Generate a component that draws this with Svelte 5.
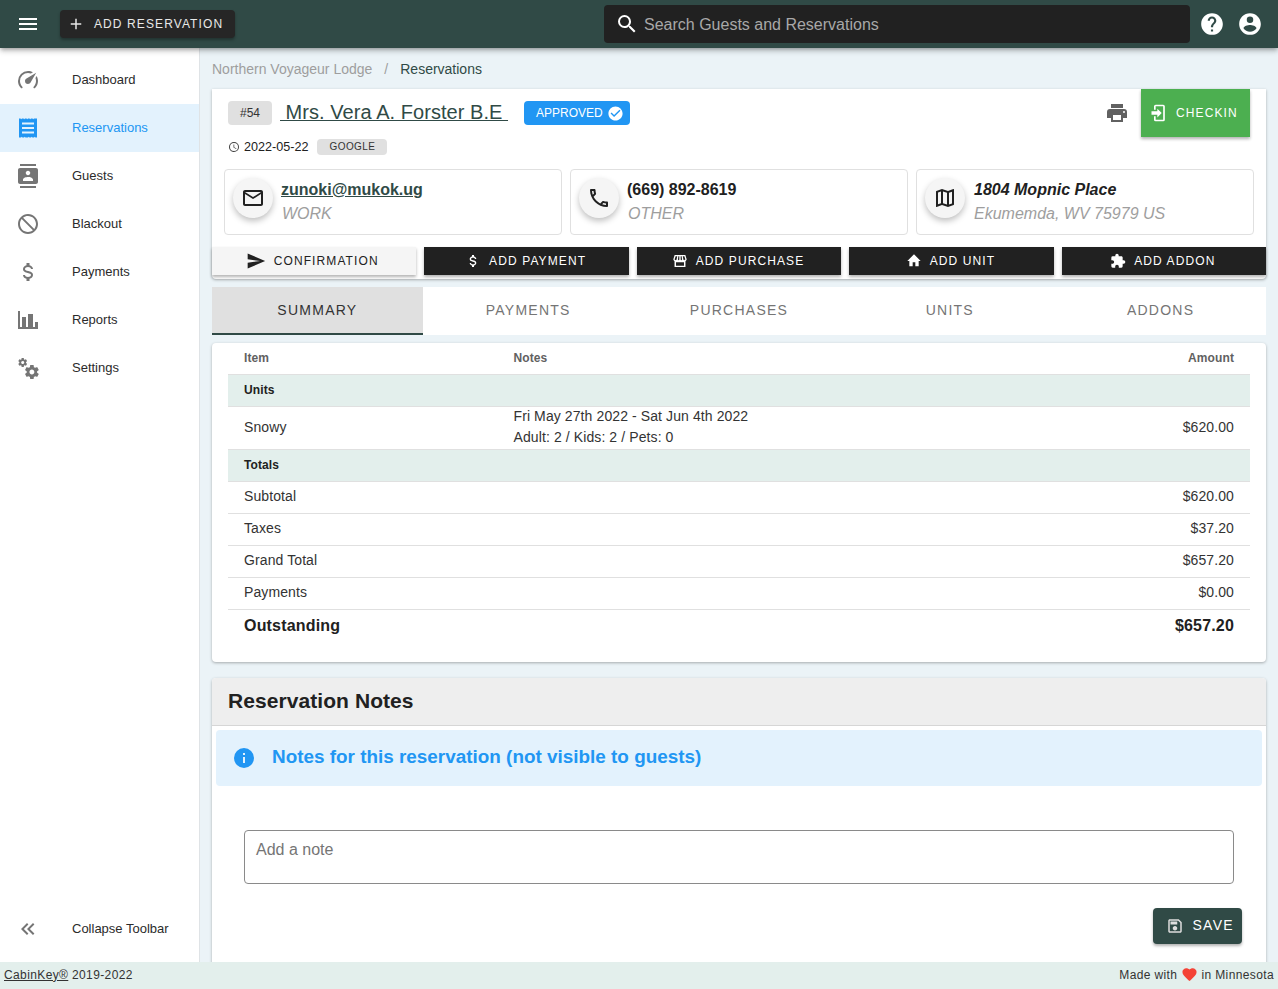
<script>
  const p = {
    menu: 'M3,6H21V8H3V6M3,11H21V13H3V11M3,16H21V18H3V16Z',
    plus: 'M19,13H13V19H11V13H5V11H11V5H13V11H19V13Z',
    search: 'M9.5,3A6.5,6.5 0 0,1 16,9.5C16,11.11 15.41,12.59 14.44,13.73L14.71,14H15.5L20.5,19L19,20.5L14,15.5V14.71L13.73,14.44C12.59,15.41 11.11,16 9.5,16A6.5,6.5 0 0,1 3,9.5A6.5,6.5 0 0,1 9.5,3M9.5,5C7,5 5,7 5,9.5C5,12 7,14 9.5,14C12,14 14,12 14,9.5C14,7 12,5 9.5,5Z',
    help: 'M15.07,11.25L14.17,12.17C13.45,12.89 13,13.5 13,15H11V14.5C11,13.39 11.45,12.39 12.17,11.67L13.41,10.41C13.78,10.05 14,9.55 14,9C14,7.89 13.1,7 12,7A2,2 0 0,0 10,9H8A4,4 0 0,1 12,5A4,4 0 0,1 16,9C16,9.88 15.64,10.67 15.07,11.25M13,19H11V17H13M12,2A10,10 0 0,0 2,12A10,10 0 0,0 12,22A10,10 0 0,0 22,12C22,6.47 17.5,2 12,2Z',
    account: 'M12,19.2C9.5,19.2 7.29,17.92 6,16C6.03,14 10,12.9 12,12.9C14,12.9 17.97,14 18,16C16.71,17.92 14.5,19.2 12,19.2M12,5A3,3 0 0,1 15,8A3,3 0 0,1 12,11A3,3 0 0,1 9,8A3,3 0 0,1 12,5M12,2A10,10 0 0,0 2,12A10,10 0 0,0 12,22A10,10 0 0,0 22,12C22,6.47 17.5,2 12,2Z',
    gauge: 'M12,16A3,3 0 0,1 9,13C9,11.88 9.61,10.9 10.5,10.39L20.21,4.77L14.68,14.35C14.18,15.33 13.17,16 12,16M12,3C13.81,3 15.5,3.5 16.97,4.32L14.87,5.53C14,5.19 13,5 12,5A8,8 0 0,0 4,13C4,15.21 4.89,17.21 6.34,18.65H6.35C6.74,19.04 6.74,19.67 6.35,20.06C5.96,20.45 5.32,20.45 4.93,20.07V20.07C3.12,18.26 2,15.76 2,13A10,10 0 0,1 12,3M22,13C22,15.76 20.88,18.26 19.07,20.07V20.07C18.68,20.45 18.05,20.45 17.66,20.06C17.27,19.67 17.27,19.04 17.66,18.65V18.65C19.11,17.2 20,15.21 20,13C20,12 19.81,11 19.46,10.1L20.67,8C21.5,9.5 22,11.18 22,13Z',
    receipt: 'M3 2.500h1.500l.75.7.75-.7h1.500l.75.7.75-.7h1.500l.75.7.75-.7h1.500l.75.7.75-.7h1.500l.75.7.75-.7H21v19h-1.500l-.75-.7-.75.7h-1.500l-.75-.7-.75.7h-1.500l-.75-.7-.75.7H9.500l-.75-.7-.75.7H6.500l-.75-.7-.75.7H3zM6 6.500v2h12v-2zM6 11v2h12v-2zM6 15.500v2h12v-2z',
    contacts: 'M20 0H4v2h16V0zM4 24h16v-2H4v2zM20 4H4c-1.100 0-2 .9-2 2v12c0 1.100.9 2 2 2h16c1.100 0 2-.9 2-2V6c0-1.100-.9-2-2-2zm-8 2.750c1.240 0 2.250 1.010 2.250 2.250s-1.010 2.250-2.250 2.250S9.750 10.240 9.750 9 10.760 6.750 12 6.750zM17 17H7v-1.500c0-1.670 3.330-2.500 5-2.500s5 .83 5 2.500V17z',
    cancel: 'M12 2C17.5 2 22 6.5 22 12S17.5 22 12 22 2 17.5 2 12 6.5 2 12 2M12 4C10.1 4 8.4 4.6 7.1 5.7L18.3 16.9C19.3 15.5 20 13.8 20 12C20 7.6 16.4 4 12 4M16.9 18.3L5.7 7.1C4.6 8.4 4 10.1 4 12C4 16.4 7.6 20 12 20C13.9 20 15.6 19.4 16.9 18.3Z',
    dollar: 'M7,15H9C9,16.08 10.37,17 12,17C13.63,17 15,16.08 15,15C15,13.9 13.96,13.5 11.76,12.97C9.64,12.44 7,11.78 7,9C7,7.21 8.47,5.69 10.5,5.18V3H13.5V5.18C15.53,5.69 17,7.21 17,9H15C15,7.92 13.63,7 12,7C10.37,7 9,7.92 9,9C9,10.1 10.04,10.5 12.24,11.03C14.36,11.56 17,12.22 17,15C17,16.79 15.53,18.31 13.5,18.82V21H10.5V18.82C8.47,18.31 7,16.79 7,15Z',
    chart: 'M2 3h2v16h2V9h4v10h2V6h5v13h2v-5h3v7H2z',
    cogs: 'M15.9,18.45C17.25,18.45 18.35,17.35 18.35,16C18.35,14.65 17.25,13.55 15.9,13.55C14.54,13.55 13.45,14.65 13.45,16C13.45,17.35 14.54,18.45 15.9,18.45M21.1,16.68L22.58,17.84C22.71,17.95 22.75,18.13 22.66,18.29L21.26,20.71C21.17,20.86 21,20.92 20.83,20.86L19.09,20.16C18.73,20.44 18.33,20.67 17.91,20.85L17.64,22.7C17.62,22.87 17.47,23 17.3,23H14.5C14.32,23 14.18,22.87 14.15,22.7L13.89,20.85C13.46,20.67 13.07,20.44 12.71,20.16L10.96,20.86C10.81,20.92 10.62,20.86 10.54,20.71L9.14,18.29C9.05,18.13 9.09,17.95 9.22,17.84L10.7,16.68L10.65,16L10.7,15.31L9.22,14.16C9.09,14.05 9.05,13.86 9.14,13.71L10.54,11.29C10.62,11.13 10.81,11.07 10.96,11.13L12.71,11.84C13.07,11.56 13.46,11.32 13.89,11.15L14.15,9.29C14.18,9.13 14.32,9 14.5,9H17.3C17.47,9 17.62,9.13 17.64,9.29L17.91,11.15C18.33,11.32 18.73,11.56 19.09,11.84L20.83,11.13C21,11.07 21.17,11.13 21.26,11.29L22.66,13.71C22.75,13.86 22.71,14.05 22.58,14.16L21.1,15.31L21.15,16L21.1,16.68M6.69,8.07C7.56,8.07 8.26,7.37 8.26,6.5C8.26,5.63 7.56,4.92 6.69,4.92A1.58,1.58 0 0,0 5.11,6.5C5.11,7.37 5.82,8.07 6.69,8.07M10.03,6.94L11,7.68C11.07,7.75 11.09,7.87 11.03,7.97L10.13,9.53C10.08,9.63 9.96,9.67 9.86,9.63L8.74,9.18L8,9.62L7.81,10.81C7.79,10.92 7.7,11 7.59,11H5.79C5.67,11 5.58,10.92 5.56,10.81L5.4,9.62L4.63,9.18L3.5,9.63C3.41,9.67 3.3,9.63 3.24,9.53L2.34,7.97C2.28,7.87 2.31,7.75 2.39,7.68L3.34,6.94L3.31,6.5L3.34,6.06L2.39,5.32C2.31,5.25 2.28,5.13 2.34,5.03L3.24,3.47C3.3,3.37 3.41,3.33 3.5,3.37L4.63,3.82L5.4,3.38L5.56,2.19C5.58,2.08 5.67,2 5.79,2H7.59C7.7,2 7.79,2.08 7.81,2.19L8,3.38L8.74,3.82L9.86,3.37C9.96,3.33 10.08,3.37 10.13,3.47L11.03,5.03C11.09,5.13 11.07,5.25 11,5.32L10.03,6.06L10.06,6.5L10.03,6.94Z',
    collapse: 'M18.41,7.41L17,6L11,12L17,18L18.41,16.59L13.83,12L18.41,7.41M12.41,7.41L11,6L5,12L11,18L12.41,16.59L7.83,12L12.41,7.41Z',
    printer: 'M18,3H6V7H18M19,12A1,1 0 0,1 18,11A1,1 0 0,1 19,10A1,1 0 0,1 20,11A1,1 0 0,1 19,12M16,19H8V14H16M19,8H5A3,3 0 0,0 2,11V17H6V21H18V17H22V11A3,3 0 0,0 19,8Z',
    check: 'M12 2C6.5 2 2 6.5 2 12S6.5 22 12 22 22 17.5 22 12 17.5 2 12 2M10 17L5 12L6.41 10.59L10 14.17L17.59 6.58L19 8L10 17Z',
    clock: 'M12,20A8,8 0 0,0 20,12A8,8 0 0,0 12,4A8,8 0 0,0 4,12A8,8 0 0,0 12,20M12,2A10,10 0 0,1 22,12A10,10 0 0,1 12,22C6.47,22 2,17.5 2,12A10,10 0 0,1 12,2M12.5,7V12.25L17,14.92L16.25,16.15L11,13V7H12.5Z',
    email: 'M22 6C22 4.9 21.1 4 20 4H4C2.9 4 2 4.9 2 6V18C2 19.1 2.9 20 4 20H20C21.1 20 22 19.1 22 18V6M20 6L12 11L4 6H20M20 18H4V8L12 13L20 8V18Z',
    phone: 'M20,15.5C18.8,15.5 17.5,15.3 16.4,14.9C16.3,14.9 16.2,14.9 16.1,14.9C15.8,14.9 15.6,15 15.4,15.2L13.2,17.4C10.4,15.9 8,13.6 6.6,10.8L8.8,8.6C9.1,8.3 9.2,7.9 9,7.6C8.7,6.5 8.5,5.2 8.5,4C8.5,3.5 8,3 7.5,3H4C3.5,3 3,3.5 3,4C3,13.4 10.6,21 20,21C20.5,21 21,20.5 21,20V16.5C21,16 20.5,15.5 20,15.5M5,5H6.5C6.6,5.9 6.8,6.8 7,7.6L5.8,8.8C5.4,7.6 5.1,6.3 5,5M19,19C17.7,18.9 16.4,18.6 15.2,18.2L16.4,17C17.2,17.2 18.1,17.4 19,17.4V19Z',
    map: 'M20.5,3L20.34,3.03L15,5.1L9,3L3.36,4.9C3.15,4.97 3,5.15 3,5.38V20.5A0.5,0.5 0 0,0 3.5,21L3.66,20.97L9,18.9L15,21L20.64,19.1C20.85,19.03 21,18.85 21,18.62V3.5A0.5,0.5 0 0,0 20.5,3M10,5.47L14,6.87V18.53L10,17.13V5.47M5,6.46L8,5.45V17.15L5,18.31V6.46M19,17.54L16,18.55V6.86L19,5.7V17.54Z',
    send: 'M2,21L23,12L2,3V10L17,12L2,14V21Z',
    store: 'M4 3h16l2 6.5c0 1.2-.7 2.2-1.8 2.7V21H3.8v-8.8C2.7 11.7 2 10.7 2 9.5zM6 14v5h12v-5zM5.500 5L4 9.500c0 1.700 3 1.700 3 0L7.800 5zM9.500 5L9 9.500c0 1.700 2 1.700 2 0V5zM13 5v4.500c0 1.700 2 1.700 2 0L14.500 5zM16.200 5l.8 4.500c0 1.700 3 1.700 3 0L18.500 5z',
    home: 'M10,20V14H14V20H19V12H22L12,2L2,12H5V20H10Z',
    puzzle: 'M20.5,11H19V7C19,5.89 18.1,5 17,5H13V3.5A2.5,2.5 0 0,0 10.5,1A2.5,2.5 0 0,0 8,3.5V5H4A2,2 0 0,0 2,7V10.8H3.5C5,10.8 6.2,12 6.2,13.5C6.2,15 5,16.2 3.5,16.2H2V20A2,2 0 0,0 4,22H7.8V20.5C7.8,19 9,17.8 10.5,17.8C12,17.8 13.2,19 13.2,20.5V22H17A2,2 0 0,0 19,20V16H20.5A2.5,2.5 0 0,0 23,13.5A2.5,2.5 0 0,0 20.5,11Z',
    login: 'M10,17.25V14H3V10H10V6.75L15.25,12L10,17.25M8,2H17A2,2 0 0,1 19,4V20A2,2 0 0,1 17,22H8A2,2 0 0,1 6,20V16H8V20H17V4H8V8H6V4A2,2 0 0,1 8,2Z',
    info: 'M13,9H11V7H13M13,17H11V11H13M12,2A10,10 0 0,0 2,12A10,10 0 0,0 12,22A10,10 0 0,0 22,12A10,10 0 0,0 12,2Z',
    save: 'M17 3H5C3.89 3 3 3.9 3 5V19C3 20.1 3.89 21 5 21H19C20.1 21 21 20.1 21 19V7L17 3M19 19H5V5H16.17L19 7.83V19M12 12C10.34 12 9 13.34 9 15S10.34 18 12 18 15 16.66 15 15 13.66 12 12 12M6 6H15V10H6V6Z',
    heart: 'M12,21.35L10.55,20.03C5.4,15.36 2,12.27 2,8.5C2,5.41 4.42,3 7.5,3C9.24,3 10.91,3.81 12,5.08C13.09,3.81 14.76,3 16.5,3C19.58,3 22,5.41 22,8.5C22,12.27 18.6,15.36 13.45,20.03L12,21.35Z'
  };
  const nav = [
    { label: 'Dashboard', icon: p.gauge },
    { label: 'Reservations', icon: p.receipt, active: true },
    { label: 'Guests', icon: p.contacts },
    { label: 'Blackout', icon: p.cancel },
    { label: 'Payments', icon: p.dollar },
    { label: 'Reports', icon: p.chart },
    { label: 'Settings', icon: p.cogs }
  ];
  const actions = [
    { label: 'Confirmation', icon: p.send, light: true, big: true },
    { label: 'Add Payment', icon: p.dollar },
    { label: 'Add Purchase', icon: p.store },
    { label: 'Add Unit', icon: p.home },
    { label: 'Add Addon', icon: p.puzzle }
  ];
  const tabs = ['Summary', 'Payments', 'Purchases', 'Units', 'Addons'];
  const totals = [
    ['Subtotal', '$620.00'],
    ['Taxes', '$37.20'],
    ['Grand Total', '$657.20'],
    ['Payments', '$0.00']
  ];
</script>

{#snippet ic(d, cls)}
  <svg class={cls} viewBox="0 0 24 24" aria-hidden="true"><path {d} fill="currentColor" /></svg>
{/snippet}

<div class="app">
  <header class="top">
    <button class="hamb">{@render ic(p.menu, 'i24')}</button>
    <button class="add">{@render ic(p.plus, 'i18')}<span>ADD RESERVATION</span></button>
    <div class="spacer"></div>
    <div class="search">{@render ic(p.search, 'i24')}<span class="stext">Search Guests and Reservations</span></div>
    <div class="topicons">{@render ic(p.help, 'i26')}{@render ic(p.account, 'i26')}</div>
  </header>

  <div class="body">
    <nav class="side">
      <div class="navlist">
        {#each nav as n}
          <div class="navitem" class:active={n.active}>
            <span class="navicon">{@render ic(n.icon, 'i24')}</span>
            <span class="navtext">{n.label}</span>
          </div>
        {/each}
      </div>
      <div class="navitem collapse">
        <span class="navicon">{@render ic(p.collapse, 'i24')}</span>
        <span class="navtext">Collapse Toolbar</span>
      </div>
    </nav>

    <main class="main">
      <div class="crumbs">
        <span class="muted">Northern Voyageur Lodge</span>
        <span class="muted sep">/</span>
        <span class="cur">Reservations</span>
      </div>

      <section class="card head">
        <div class="titlerow">
          <span class="chip idchip">#54</span>
          <a class="guest" href="#top">&nbsp;Mrs. Vera A. Forster B.E&nbsp;</a>
          <span class="approved">APPROVED {@render ic(p.check, 'i17')}</span>
          <div class="spacer"></div>
          <span class="print">{@render ic(p.printer, 'i24')}</span>
          <button class="checkin">{@render ic(p.login, 'i20')}<span>CHECKIN</span></button>
        </div>
        <div class="daterow">
          {@render ic(p.clock, 'i12')}
          <span class="date">2022-05-22</span>
          <span class="chip source">GOOGLE</span>
        </div>
        <div class="contacts">
          <div class="contact">
            <span class="avatar">{@render ic(p.email, 'i24')}</span>
            <div class="ctext"><a class="prim link" href="#top">zunoki@mukok.ug</a><div class="sec">WORK</div></div>
          </div>
          <div class="contact">
            <span class="avatar">{@render ic(p.phone, 'i24')}</span>
            <div class="ctext"><div class="prim">(669) 892-8619</div><div class="sec">OTHER</div></div>
          </div>
          <div class="contact">
            <span class="avatar">{@render ic(p.map, 'i24')}</span>
            <div class="ctext"><div class="prim ital">1804 Mopnic Place</div><div class="sec">Ekumemda, WV 75979 US</div></div>
          </div>
        </div>
        <div class="actions">
          {#each actions as a}
            <button class="act" class:light={a.light}>{@render ic(a.icon, a.big ? 'i20' : 'i16')}<span>{a.label}</span></button>
          {/each}
        </div>
      </section>

      <div class="tabs">
        {#each tabs as t, i}
          <div class="tab" class:on={i === 0}>{t}</div>
        {/each}
      </div>

      <section class="card summary">
        <div class="row thead"><span class="c1">Item</span><span class="c2">Notes</span><span class="c3">Amount</span></div>
        <div class="row group"><span>Units</span></div>
        <div class="row unit">
          <span class="c1">Snowy</span>
          <span class="c2">Fri May 27th 2022 - Sat Jun 4th 2022<br />Adult: 2 / Kids: 2 / Pets: 0</span>
          <span class="c3">$620.00</span>
        </div>
        <div class="row group"><span>Totals</span></div>
        {#each totals as t}
          <div class="row total"><span class="c1">{t[0]}</span><span class="c2"></span><span class="c3">{t[1]}</span></div>
        {/each}
        <div class="row out"><span class="c1">Outstanding</span><span class="c2"></span><span class="c3">$657.20</span></div>
      </section>

      <section class="card notes">
        <h2>Reservation Notes</h2>
        <div class="alert">{@render ic(p.info, 'i24')}<span>Notes for this reservation (not visible to guests)</span></div>
        <div class="field">Add a note</div>
        <div class="saverow"><button class="save">{@render ic(p.save, 'i18')}<span>SAVE</span></button></div>
      </section>
    </main>
  </div>

  <footer class="foot">
    <span><a href="#top">CabinKey®</a> 2019-2022</span>
    <span class="made">Made with {@render ic(p.heart, 'i17 heart')} in Minnesota</span>
  </footer>
</div>

<style>
  :global(body) { margin: 0; font-family: "Liberation Sans", Arial, sans-serif; color: #212121; }
  .app { width: 1278px; height: 989px; display: flex; flex-direction: column; overflow: hidden; }
  svg { display: block; flex: none; }
  :global(.i12) { width: 12px; height: 12px; }
  :global(.i16) { width: 16px; height: 16px; }
  :global(.i17) { width: 17px; height: 17px; }
  :global(.i18) { width: 18px; height: 18px; }
  :global(.i20) { width: 20px; height: 20px; }
  :global(.i24) { width: 24px; height: 24px; }
  :global(.i26) { width: 26px; height: 26px; }
  button { font-family: inherit; border: 0; cursor: pointer; }
  a { color: inherit; }
  .spacer { flex: 1; }

  .top { height: 48px; flex: none; background: #304a46; display: flex; align-items: center; color: #fff; position: relative; z-index: 3; box-shadow: 0 2px 4px -1px rgba(0,0,0,.3), 0 4px 5px rgba(0,0,0,.14); }
  .hamb { width: 24px; height: 24px; padding: 0; margin-left: 16px; background: none; color: #fff; }
  .add { margin-left: 20px; width: 175px; height: 28px; border-radius: 4px; background: #262626; color: #e8e8e8; display: flex; align-items: center; padding: 0 0 0 7px; font-size: 12px; letter-spacing: 1.1px; gap: 9px; box-shadow: 0 2px 3px rgba(0,0,0,.3); }
  .search { width: 586px; height: 38px; background: #212121; border-radius: 4px; display: flex; align-items: center; padding-left: 11px; gap: 5px; box-sizing: border-box; font-size: 16px; color: #a8a8a8; }
  .search svg { color: #fff; }
  .stext { padding-top: 2px; }
  .topicons { margin-left: 9px; margin-right: 15px; display: flex; gap: 12px; }

  .body { flex: 1; display: flex; min-height: 0; }
  .side { width: 200px; flex: none; box-sizing: border-box; background: #fff; border-right: 1px solid #dfe3e6; display: flex; flex-direction: column; padding-top: 8px; }
  .navlist { flex: 1; }
  .navitem { height: 48px; display: flex; align-items: center; font-size: 13px; color: #2b2b2b; }
  .navtext { padding-bottom: 2px; }
  .navicon { width: 72px; padding-left: 16px; box-sizing: border-box; color: #757575; flex: none; }
  .navitem.active { background: #e3f2fd; color: #2196f3; }
  .navitem.active .navicon { color: #2196f3; }
  .collapse { margin-bottom: 9px; }

  .main { flex: 1; background: #ebf3f7; padding: 0 12px; overflow: hidden; min-width: 0; }
  .crumbs { height: 41px; display: flex; align-items: center; gap: 12px; font-size: 14px; color: #304a46; }
  .muted { color: #9e9e9e; }
  .sep { color: #9e9e9e; }
  .card { background: #fff; border-radius: 4px; box-shadow: 0 1px 3px rgba(0,0,0,.3); }

  .head { height: 190px; box-sizing: border-box; border-radius: 0 0 4px 4px; }
  .titlerow { height: 48px; display: flex; align-items: center; padding: 0 16px; }
  .chip { background: #e0e0e0; border-radius: 4px; display: inline-flex; align-items: center; justify-content: center; color: #333; }
  .idchip { width: 44px; height: 24px; font-size: 12px; }
  .guest { margin-left: 8px; font-size: 20px; letter-spacing: .05px; color: #304a46; text-decoration: underline; text-decoration-thickness: 1px; padding-bottom: 2px; }
  .approved { margin-left: 16px; width: 106px; box-sizing: border-box; height: 24px; background: #2196f3; border-radius: 4px; color: #fff; font-size: 12px; display: inline-flex; align-items: center; padding-left: 12px; gap: 4px; }
  .print { color: #616161; margin-right: 12px; }
  .checkin { width: 109px; height: 48px; background: #4caf50; color: #fff; display: flex; align-items: center; padding: 0 0 0 8px; gap: 7px; font-size: 12px; letter-spacing: 1.1px; margin-right: 0; box-shadow: 0 2px 3px rgba(0,0,0,.3); }
  .daterow { display: flex; align-items: center; height: 16px; margin-top: 2px; padding-left: 16px; font-size: 12.6px; gap: 4px; }
  .date { padding-bottom: 1px; }
  .daterow svg { margin-left: 0; color: #424242; }
  .source { width: 70px; height: 16px; margin-left: 5px; font-size: 10px; letter-spacing: .4px; padding-bottom: 1px; box-sizing: border-box; }
  .contacts { display: grid; grid-template-columns: repeat(3, 1fr); gap: 8px; padding: 0 12px; margin-top: 14px; }
  .contact { height: 66px; box-sizing: border-box; border: 1px solid #e0e0e0; border-radius: 4px; padding: 8px; display: flex; gap: 8px; }
  .avatar { width: 40px; height: 40px; border-radius: 50%; background: #f5f5f5; display: flex; align-items: center; justify-content: center; box-shadow: 0 3px 6px rgba(0,0,0,.25); flex: none; }
  .prim { display: block; font-size: 16px; font-weight: 700; line-height: 24px; }
  .link { color: #304a46; }
  .ital { font-style: italic; padding-left: 1px; }
  .sec { font-size: 16px; font-style: italic; color: #9e9e9e; line-height: 24px; padding-left: 1px; }
  .actions { display: grid; grid-template-columns: repeat(5, 1fr); gap: 8px; margin-top: 12px; }
  .act { height: 28px; background: #212121; color: #fff; display: flex; align-items: center; justify-content: center; gap: 8px; font-size: 12px; letter-spacing: 1.1px; text-transform: uppercase; box-shadow: 0 2px 3px rgba(0,0,0,.3); padding: 0 2px 0 0; }
  .act.light { background: #f5f5f5; color: #212121; padding-right: 4px; }

  .tabs { margin-top: 8px; height: 48px; background: #fff; display: grid; grid-template-columns: repeat(5, 1fr); }
  .tab { display: flex; align-items: center; justify-content: center; font-size: 14px; letter-spacing: 1.25px; text-transform: uppercase; color: #757575; padding-bottom: 2px; box-sizing: border-box; }
  .tab.on { background: #e0e0e0; color: #333; border-bottom: 2px solid #304a46; padding-bottom: 0; }

  .summary { margin-top: 8px; height: 319px; padding: 0 16px; box-sizing: border-box; }
  .row { height: 32px; box-sizing: border-box; border-bottom: 1px solid #e0e0e0; display: flex; align-items: center; padding: 0 16px 2px; font-size: 14px; letter-spacing: .1px; color: #333; }
  .total { padding-bottom: 4px; }
  .c1 { width: 269.5px; flex: none; }
  .c2 { flex: 1; }
  .c3 { text-align: right; }
  .thead { font-size: 12px; font-weight: 700; color: #616161; }
  .group { background: #e3efec; font-size: 12px; font-weight: 700; color: #212121; }
  .unit { height: 43px; line-height: 21px; }
  .out { border-bottom: 0; font-size: 16px; font-weight: 700; color: #212121; padding-bottom: 0; letter-spacing: .18px; }

  .notes { margin-top: 16px; height: 320px; }
  .notes h2 { margin: 0; height: 48px; box-sizing: border-box; background: #eee; border-bottom: 1px solid #d6d6d6; border-radius: 4px 4px 0 0; display: flex; align-items: center; padding: 0 0 2px 16px; font-size: 21px; letter-spacing: .07px; font-weight: 700; color: #212121; }
  .alert { margin: 4px 4px 0; height: 56px; background: #e3f2fd; border-radius: 4px; display: flex; align-items: center; padding: 0 0 2px 16px; box-sizing: border-box; gap: 16px; color: #2196f3; font-size: 18.9px; font-weight: 700; }
  .alert svg { margin-top: 2px; }
  .field { margin: 44px 32px 0; height: 54px; box-sizing: border-box; border: 1px solid #8a8a8a; border-radius: 4px; padding: 10px 11px; font-size: 16px; color: #757575; }
  .saverow { display: flex; justify-content: flex-end; margin: 24px 24px 0 0; }
  .save { width: 89px; height: 36px; background: #304a46; color: #fff; border-radius: 4px; display: flex; align-items: center; gap: 8.5px; font-size: 14px; letter-spacing: 1.25px; box-shadow: 0 2px 3px rgba(0,0,0,.3); padding: 0 0 2px 13px; box-sizing: border-box; }
  .save svg { color: #ddd; margin-top: 2px; }

  .foot { height: 27px; flex: none; background: #e3efec; display: flex; justify-content: space-between; align-items: center; padding: 0 4px 2px; box-sizing: border-box; font-size: 12px; letter-spacing: .38px; color: #333; position: relative; z-index: 2; }
  .made { display: inline-flex; align-items: center; gap: 3.5px; }
  :global(.heart) { color: #f44336; }
</style>
